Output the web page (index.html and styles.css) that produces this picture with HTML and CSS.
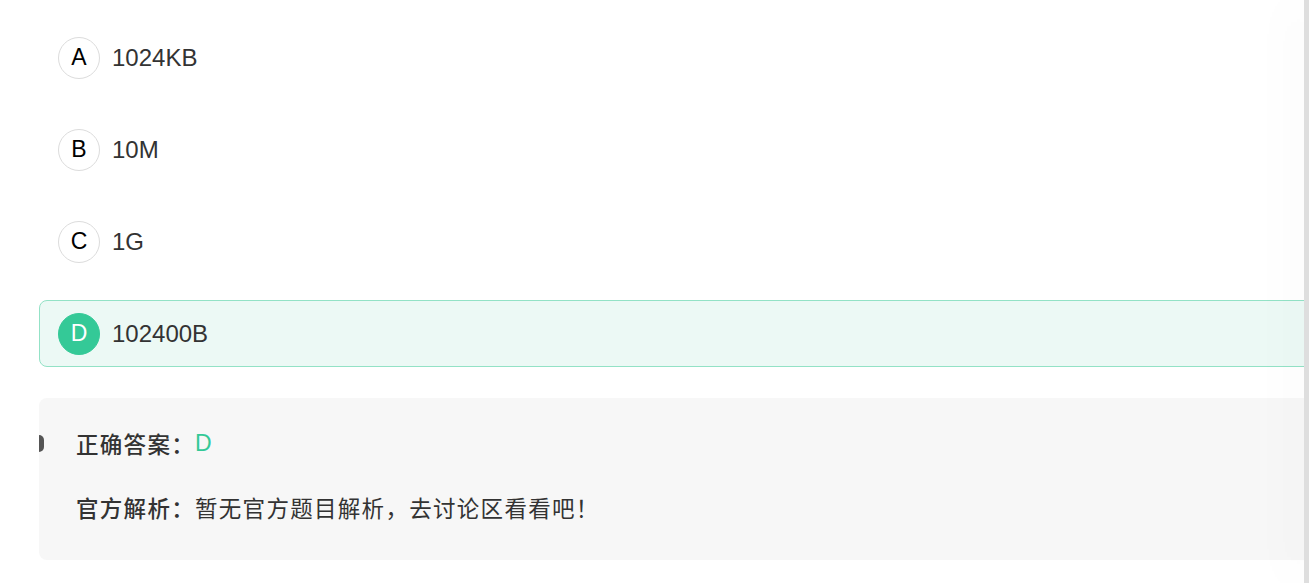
FILE: index.html
```html
<!DOCTYPE html>
<html lang="zh-CN">
<head>
    <meta charset="UTF-8">
    <meta name="viewport" content="width=device-width, initial-scale=1.0">
    <title>题目详情</title>
    <link rel="stylesheet" href="styles.css">
</head>
<body>
    <div class="page">
        <ul class="options">
            <li class="option">
                <span class="option-key">A</span>
                <span class="option-text">1024KB</span>
            </li>
            <li class="option">
                <span class="option-key">B</span>
                <span class="option-text">10M</span>
            </li>
            <li class="option">
                <span class="option-key">C</span>
                <span class="option-text">1G</span>
            </li>
            <li class="option option-right">
                <span class="option-key">D</span>
                <span class="option-text">102400B</span>
            </li>
        </ul>

        <div class="analysis">
            <span class="analysis-mark"></span>
            <div class="analysis-row">
                <span class="analysis-label">正确答案：</span>
                <span class="answer">D</span>
            </div>
            <div class="analysis-row">
                <span class="analysis-label">官方解析：</span>
                <span class="analysis-text">暂无官方题目解析，去讨论区看看吧！</span>
            </div>
        </div>
    </div>

    <!-- edge of the side panel -->
    <div class="side-edge"></div>
</body>
</html>
```

FILE: styles.css
```css
* {
    margin: 0;
    padding: 0;
    box-sizing: border-box;
}

body {
    font-family: "Liberation Sans", "Noto Sans CJK SC", sans-serif;
    background: #fff;
    color: #333;
    overflow: hidden;
    height: 583px;
}

.page {
    padding: 24px 0 0 39px;
    margin-right: -40px;
}

.options {
    list-style: none;
}

.option {
    display: flex;
    align-items: center;
    gap: 12px;
    height: 67px;
    padding: 0 18px;
    margin-bottom: 25px;
    border: 1px solid transparent;
    border-radius: 8px;
}

.option:last-child {
    margin-bottom: 0;
}

.option-key {
    width: 42px;
    height: 42px;
    border-radius: 50%;
    border: 1px solid #dcdcdc;
    display: flex;
    align-items: center;
    justify-content: center;
    font-size: 23px;
    color: #000;
    flex-shrink: 0;
}

.option-text {
    font-size: 24px;
    color: #333;
}

.option-right {
    background: #ecf9f5;
    border-color: #93e2c6;
}

.option-right .option-key {
    background: #34c997;
    border-color: #34c997;
    color: #fff;
}

.analysis {
    position: relative;
    margin-top: 31px;
    background: #f7f7f7;
    border-radius: 8px;
    padding: 30px 37px 38px;
    font-family: "Noto Sans CJK SC", "Liberation Sans", sans-serif;
    font-size: 22.5px;
    line-height: 30px;
    letter-spacing: 1.3px;
    color: #333;
}

.analysis-mark {
    position: absolute;
    left: 0;
    top: 37px;
    width: 5px;
    height: 17px;
    background: #555;
    border-radius: 0 5px 5px 0;
}

.analysis-row {
    display: flex;
    align-items: center;
}

.analysis-row + .analysis-row {
    margin-top: 34px;
}

.analysis-label {
    font-weight: 500;
    color: #333;
}

.answer {
    color: #34c997;
    font-family: "Liberation Sans", sans-serif;
    font-size: 23px;
    letter-spacing: 0;
}

.side-edge {
    position: fixed;
    top: 0;
    right: 0;
    width: 5px;
    height: 100%;
    background: #dedede;
    box-shadow: -8px 0 45px rgba(0, 0, 0, 0.1);
}
```
